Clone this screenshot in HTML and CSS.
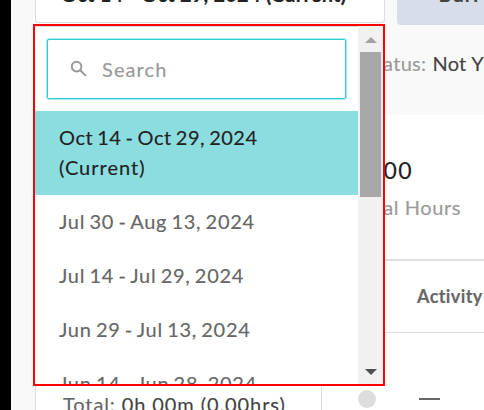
FILE: index.html
```html
<!DOCTYPE html>
<html lang="en">
<head>
<meta charset="utf-8">
<title>Timesheet</title>
<link rel="stylesheet" href="styles.css">
</head>
<body>
<div class="page">
  <div class="rail"></div>
  <div class="main">
    <header class="toolbar">
      <div class="period"><span>Oct 14 - Oct 29, 2024 (Current)</span></div>
      <div class="side">
        <div class="button"><span>+Burr</span></div>
        <div class="status"><span class="label">Status:</span> Not Y</div>
      </div>
    </header>
    <div class="content">
      <aside class="total"><div><span class="muted">Total:</span> 0h 00m (0.00hrs)</div></aside>
      <section class="details">
        <div class="summary">
          <div class="hours">0.00</div>
          <div class="caption">Total Hours</div>
        </div>
        <div class="thead">Activity</div>
        <div class="trow"><i class="dot"></i><i class="dash"></i></div>
      </section>
    </div>
  </div>
</div>
<div class="dropdown">
  <div class="list">
    <div class="search">
      <svg width="18" height="18" viewBox="0 0 18 18" fill="none" stroke="#999" stroke-width="2"><circle cx="5.6" cy="6.6" r="4.8"/><path d="M9.3 10.3L14.9 15.9"/></svg>
      <span>Search</span>
    </div>
    <div class="option selected"><span>Oct 14 - Oct 29, 2024</span><br><span class="current">(Current)</span></div>
    <div class="option wide"><span>Jul 30 - Aug 13, 2024</span></div>
    <div class="option wide"><span>Jul 14 - Jul 29, 2024</span></div>
    <div class="option wide"><span>Jun 29 - Jul 13, 2024</span></div>
    <div class="option wide"><span>Jun 14 - Jun 28, 2024</span></div>
  </div>
  <div class="scrollbar">
    <svg class="up" width="12" height="6" viewBox="0 0 12 6"><path d="M0 6L6 0L12 6Z" fill="#a3a3a3"/></svg>
    <div class="thumb"></div>
    <svg class="down" width="12" height="6" viewBox="0 0 12 6"><path d="M0 0L6 6L12 0Z" fill="#505050"/></svg>
  </div>
</div>
</body>
</html>
```
FILE: styles.css
```css
* { box-sizing: border-box; }
body { margin: 0; font-family: Lato, sans-serif; font-size: 20px; line-height: 30px; color: #222; white-space: nowrap; font-variant-ligatures: none; -webkit-text-stroke: 0.15px currentColor; }
.page { display: flex; width: 484px; height: 410px; overflow: hidden; background: #f9f9f9; }
.rail { width: 11px; background: #000; }
.main { flex: 1; min-width: 0; padding-left: 24px; }
.toolbar { display: flex; height: 115px; gap: 12px; }
.period { width: 350px; height: 23px; flex: none; background: #fff; border: 1px solid #ddd; border-top: 0; border-radius: 0 0 3px 3px; padding-left: 25px; overflow: hidden; letter-spacing: 0.2px; }
.period span, .button span { display: block; margin-top: -21px; font-weight: 700; }
.side { width: 87px; }
.button { height: 25px; background: #d7deea; border-radius: 0 0 0 4px; padding-left: 29px; overflow: hidden; color: #444; letter-spacing: 1px; }
.status { display: flex; justify-content: flex-end; gap: 6px; width: 87px; margin-top: 23px; color: #444; letter-spacing: 0.3px; }
.label, .caption { color: #999; }
.content { display: flex; height: 295px; }
.total { width: 287px; background: #fff; border: 1px solid #ddd; border-width: 0 1px; padding: 274px 0 0 27px; color: #444; overflow: hidden; letter-spacing: 0.9px; }
.muted { color: #666; }
.details { flex: 1; background: #fff; }
.summary { height: 146px; padding: 40px 0 0 32px; border-bottom: 2px solid #ddd; }
.hours { padding-left: 8px; font-size: 23px; letter-spacing: 1.4px; }
.caption { margin-top: 7px; letter-spacing: 0.55px; }
.thead { height: 72px; border-bottom: 1px solid #ddd; padding: 20px 0 0 95px; font-size: 18px; font-weight: 700; color: #666; letter-spacing: 0.4px; }
.trow { display: flex; align-items: center; height: 132px; padding: 0 0 0 36px; }
.dot { width: 18px; height: 18px; border-radius: 50%; background: #ddd; }
.dash { width: 21px; height: 2px; margin-left: 43px; background: #666; }
.dropdown { position: absolute; left: 33px; top: 24px; width: 352px; height: 362px; display: flex; border: 2px solid #f00; background: #fff; overflow: hidden; }
.list { width: 323px; border-top: 1px solid #ddd; overflow: hidden; }
.search { display: flex; align-items: center; gap: 13px; height: 60px; width: 299px; margin: 12px 0 12px 12px; padding-left: 23px; border: 1px solid #2fcbd1; border-radius: 2px; box-shadow: 0 0 0 1px #a5eaec; color: #999; letter-spacing: 1.1px; }
.option { padding: 11px 24px 13px; color: #666; letter-spacing: 0.5px; word-spacing: -1.5px; }
.wide { letter-spacing: 0.7px; }
.current { letter-spacing: 1px; }
.selected { background: #8cdde0; color: #222; }
.scrollbar { width: 25px; background: #f1f1f1; display: flex; flex-direction: column; align-items: center; }
.up { margin: 11px 0 9px; }
.thumb { width: 21px; height: 145px; background: #a8a8a8; }
.down { margin-top: auto; margin-bottom: 9px; }
```
